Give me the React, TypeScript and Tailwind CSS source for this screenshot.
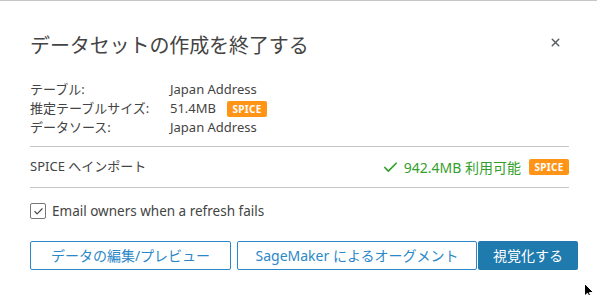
import { X, Check } from 'lucide-react'

const info = [
  { label: 'テーブル:', value: 'Japan Address', badge: false },
  { label: '推定テーブルサイズ:', value: '51.4MB', badge: true },
  { label: 'データソース:', value: 'Japan Address', badge: false },
]

function SpiceBadge() {
  return (
    <span className="inline-flex items-center justify-center h-[16px] w-[40px] rounded-[2px] bg-[#ff9416] text-white text-[10px] font-bold tracking-[0.3px] leading-none">
      SPICE
    </span>
  )
}

export default function App() {
  return (
    <div
      className="relative w-[597px] h-[295px] bg-white border-t border-[#c6c6c6] overflow-hidden text-[#444]"
      style={{ fontFamily: '"Noto Sans", "Noto Sans CJK JP", sans-serif' }}
    >
      <div className="pl-[30px] pr-[29px]">
        {/* Header */}
        <div className="flex items-center justify-between pt-[29px] h-[61px]">
          <h1 className="text-[20px] leading-none text-[#444] font-normal tracking-[-0.1px]">データセットの作成を終了する</h1>
          <button className="mr-[6px] mb-[8px] text-[#545b64]">
            <X size={13} strokeWidth={2.6} />
          </button>
        </div>

        {/* Info */}
        <div className="mt-[18px] flex flex-col text-[13px] leading-[19px]">
          {info.map(r => (
            <div key={r.label} className="flex items-center">
              <span className="w-[140px]">{r.label}</span>
              <span>{r.value}</span>
              {r.badge && <span className="ml-[11px] flex"><SpiceBadge /></span>}
            </div>
          ))}
        </div>

        {/* SPICE import */}
        <div className="mt-[9px] mr-[-1px] border-y border-[#c6c6c6] h-[42px] flex items-center justify-between text-[13px]">
          <span>SPICE へインポート</span>
          <div className="flex items-center">
            <Check size={17} strokeWidth={2.4} className="text-[#34a02c] mr-[5px]" />
            <span className="text-[#34a02c] text-[14px]">942.4MB 利用可能</span>
            <span className="ml-[8px] flex"><SpiceBadge /></span>
          </div>
        </div>

        {/* Checkbox */}
        <label className="mt-[13px] flex items-center gap-[6px] text-[13.5px]">
          <span className="w-[16px] h-[16px] rounded-[2px] border border-[#777] flex items-center justify-center">
            <Check size={11} strokeWidth={2.4} className="text-[#444]" />
          </span>
          <span>Email owners when a refresh fails</span>
        </label>

        {/* Buttons */}
        <div className="mt-[20px] flex text-[14px]">
          <button className="shrink-0 w-[201px] h-[29px] border border-[#2b88c8] rounded-[2px] text-[#2b88c8] bg-white">
            データの編集/プレビュー
          </button>
          <button className="shrink-0 ml-[6px] w-[240px] h-[29px] border border-[#2b88c8] rounded-[2px] text-[#2b88c8] bg-white">
            SageMaker によるオーグメント
          </button>
          <button className="shrink-0 ml-[1px] w-[100px] h-[29px] rounded-[2px] bg-[#1f7aae] text-white">
            視覚化する
          </button>
        </div>
      </div>

      {/* Mouse cursor */}
      <svg className="absolute left-[584px] top-[282px]" width="11" height="16" viewBox="0 0 11 16">
        <path d="M0.5 0.5 L0.5 13 L3.5 10.2 L5.8 15.2 L7.6 14.4 L5.4 9.6 L9.6 9.6 Z" fill="#000" stroke="#fff" strokeWidth="1" />
      </svg>
    </div>
  )
}
